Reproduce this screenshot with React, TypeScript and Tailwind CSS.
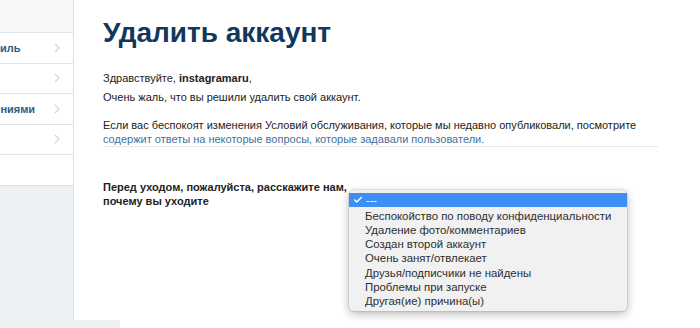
import { Check } from "lucide-react";

const menu = [
  "Редактировать профиль",
  "Смена пароля",
  "Управление приложениями",
  "Эл. почта и SMS",
];

const reasons = [
  "Беспокойство по поводу конфиденциальности",
  "Удаление фото/комментариев",
  "Создан второй аккаунт",
  "Очень занят/отвлекает",
  "Друзья/подписчики не найдены",
  "Проблемы при запуске",
  "Другая(ие) причина(ы)",
];

function Chevron() {
  return (
    <svg width="6" height="10" viewBox="0 0 6 10" className="shrink-0">
      <path d="M1 1l4 4-4 4" fill="none" stroke="#cfd5db" strokeWidth="1.2" />
    </svg>
  );
}

export default function App() {
  return (
    <div className="flex h-[328px] w-[700px] flex-col overflow-hidden bg-white font-['Liberation_Sans',Arial,sans-serif] text-[#222]">
      <div className="flex h-[320px]">
        <aside className="w-[74px] shrink-0 overflow-hidden border-r border-[#dbe1e7] bg-[#eef1f4]">
          <div className="h-[33px] border-b border-[#dfe4e9] bg-[#f7f8fa]" />
          <ul className="bg-white">
            {menu.map((item) => (
              <li key={item} className="flex h-[30.5px] items-center border-b border-[#dfe4e9] pr-[10px]">
                <span className="ml-[-115px] w-[169px] whitespace-nowrap text-[11px] font-bold text-[#2d5b85]">
                  {item}
                </span>
                <Chevron />
              </li>
            ))}
            <li className="h-[30.5px] border-b border-[#dfe4e9]" />
          </ul>
        </aside>

        <main className="flex-1 pl-[29px] pr-[42px] pt-[16px]">
          <h1 className="text-[28px] font-bold leading-[1.2] text-[#12375c]">Удалить аккаунт</h1>

          <div className="mt-[21px] text-[11px] leading-[14px]">
            <p>
              Здравствуйте, <b>instagramaru</b>,
            </p>
            <p className="mt-[5px]">Очень жаль, что вы решили удалить свой аккаунт.</p>
            <p className="mt-[14px] border-b border-[#e8e8e8]">
              Если вас беспокоят изменения Условий обслуживания, которые мы недавно опубликовали, посмотрите
              <br />
              <span className="text-[#3f729b]">содержит ответы на некоторые вопросы, которые задавали пользователи.</span>
            </p>
          </div>

          <div className="relative mt-[33px] text-[11px] leading-[14px]">
            <p className="w-[245px] font-bold">
              Перед уходом, пожалуйста, расскажите нам, почему вы уходите
            </p>

            <div className="absolute left-[246px] top-[10px] w-[278px] rounded-[5px] bg-[#f1f1f1] pb-[2px] pt-[3px] shadow-[0_3px_10px_rgba(0,0,0,0.28),0_0_0_1px_rgba(0,0,0,0.08)]">
              <div className="flex h-[14px] items-center bg-[#3d8ef7] text-white">
                <Check className="ml-[4px] h-[10px] w-[10px]" strokeWidth={3.5} />
                <span className="ml-[3px] text-[11px]">---</span>
              </div>
              <ul className="mt-[2px] whitespace-nowrap text-[11.4px] leading-[14.3px] text-[#2e2e2e]">
                {reasons.map((r) => (
                  <li key={r} className="pl-[16px]">
                    {r}
                  </li>
                ))}
              </ul>
            </div>
          </div>
        </main>
      </div>
      <div className="flex h-[8px]">
        <div className="w-[120px] bg-[#eef1f4]" />
        <div className="flex-1 bg-white" />
      </div>
    </div>
  );
}
